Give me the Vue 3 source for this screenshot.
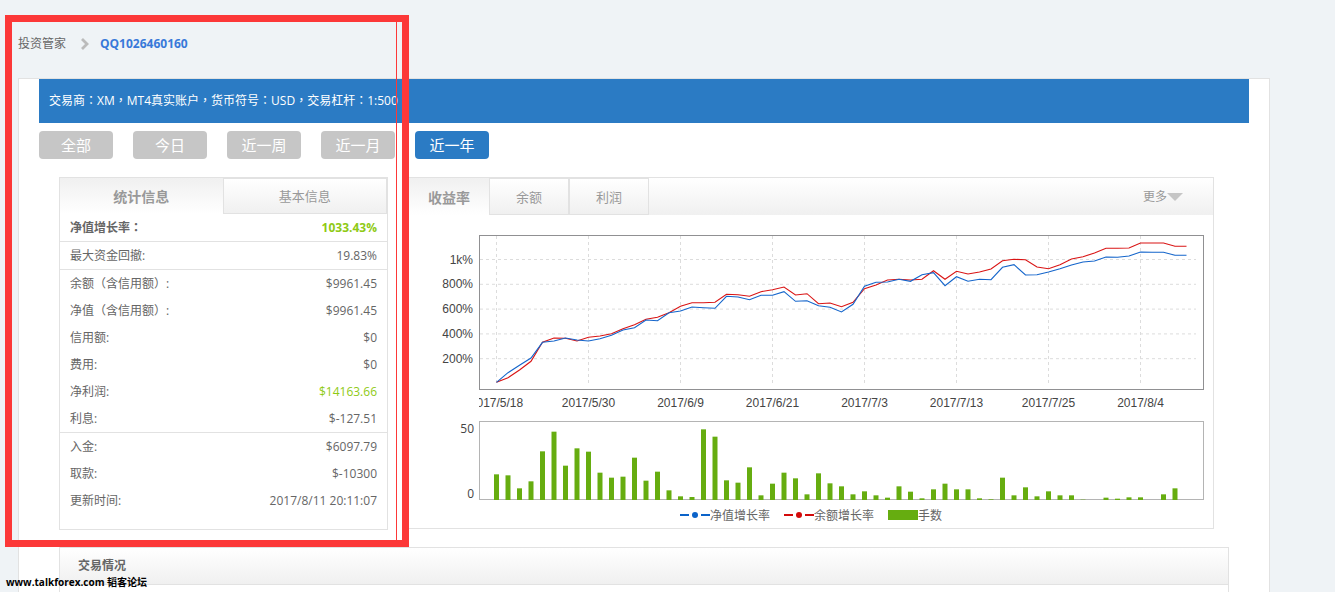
<script setup>
import { ref } from 'vue'

const ranges = ['全部', '今日', '近一周', '近一月', '近一年']
const range = ref('近一年')
const infoTabs = ['统计信息', '基本信息']
const infoTab = ref('统计信息')
const chartTabs = ['收益率', '余额', '利润']
const chartTab = ref('收益率')

const account = '交易商：XM，MT4真实账户，货币符号：USD，交易杠杆：1:500'
// Separates full-width punctuation so that it can be set centred in its cell
const split = (text) => text.split(/([：，])/).filter(Boolean).map((t) => ({ t, mark: /[：，]/.test(t) }))

const stats = [
  { label: '净值增长率：', value: '1033.43%', strong: true, green: true, line: true },
  { label: '最大资金回撤:', value: '19.83%', line: true },
  { label: '余额（含信用额）:', value: '$9961.45' },
  { label: '净值（含信用额）:', value: '$9961.45' },
  { label: '信用额:', value: '$0' },
  { label: '费用:', value: '$0' },
  { label: '净利润:', value: '$14163.66', green: true },
  { label: '利息:', value: '$-127.51', line: true },
  { label: '入金:', value: '$6097.79' },
  { label: '取款:', value: '$-10300' },
  { label: '更新时间:', value: '2017/8/11 20:11:07' }
]

// Depth of each sample below the top of the drawing, in thirds of a unit
const balance = [457, 443, 420, 394, 337, 324, 325, 333, 322, 318, 311, 296, 284, 268, 262, 248, 229, 218, 218, 217, 193, 194, 199, 185, 179, 171, 195, 191, 221, 219, 230, 217, 176, 165, 150, 148, 150, 148, 122, 148, 124, 132, 126, 117, 92, 88, 89, 111, 116, 104, 87, 80, 69, 55, 55, 54, 39, 39, 39, 49, 49]
const equity = [457, 428, 406, 384, 337, 333, 324, 330, 333, 326, 316, 300, 293, 270, 272, 248, 243, 231, 233, 235, 199, 201, 209, 196, 196, 185, 214, 212, 227, 232, 246, 223, 169, 157, 156, 148, 154, 134, 128, 167, 140, 154, 148, 149, 112, 104, 135, 134, 126, 116, 105, 96, 93, 81, 82, 78, 66, 67, 67, 76, 76]
const lots = [77, 74, 35, 56, 146, 205, 103, 155, 145, 82, 67, 70, 127, 58, 85, 29, 11, 9, 212, 190, 59, 52, 98, 14, 49, 82, 65, 17, 80, 50, 41, 17, 26, 14, 7, 41, 25, 5, 32, 49, 32, 32, 5, 2, 67, 14, 38, 11, 26, 14, 14, 1, 0, 7, 4, 8, 8, 0, 17, 35, 0]

const xAt = (i) => 87.5 + i * 11.5
const path = (values) => values.map((v, i) => `${xAt(i)},${(15 + v / 3).toFixed(1)}`).join(' ')
const dates = ['2017/5/18', '2017/5/30', '2017/6/9', '2017/6/21', '2017/7/3', '2017/7/13', '2017/7/25', '2017/8/4']
  .map((text, i) => ({ text, x: 87.5 + i * 92 }))
const levels = ['1k%', '800%', '600%', '400%', '200%'].map((text, i) => ({ text, y: 44.5 + i * 24.8 }))
const bars = lots.map((v, i) => ({ x: xAt(i) - 2.5, h: v / 3 })).filter((b) => b.h > 0)
</script>

<template>
  <div class="page">
    <nav class="crumbs">
      <a href="#" class="crumb">投资管家</a>
      <svg class="chevron" viewBox="0 0 10 12" width="10" height="12"><path d="M2 1l5 5-5 5" fill="none" stroke="#bbb" stroke-width="2.8" /></svg>
      <a href="#" class="crumb current">QQ1026460160</a>
    </nav>

    <main class="card">
      <header class="account"><span v-for="(p, i) in split(account)" :key="i" :class="{ mark: p.mark }">{{ p.t }}</span></header>
      <div class="ranges">
        <button v-for="r in ranges" :key="r" type="button" class="range" :class="{ on: r === range }" @click="range = r">{{ r }}</button>
      </div>

      <div class="columns">
        <section class="panel info">
          <div class="tabs wide">
            <button v-for="t in infoTabs" :key="t" type="button" class="tab" :class="{ on: t === infoTab }" @click="infoTab = t">{{ t }}</button>
          </div>
          <table class="stats">
            <tbody>
              <tr v-for="s in stats" :key="s.label" :class="{ strong: s.strong, line: s.line }">
                <th scope="row"><span v-for="(p, i) in split(s.label)" :key="i" :class="{ mark: p.mark }">{{ p.t }}</span></th>
                <td :class="{ green: s.green }">{{ s.value }}</td>
              </tr>
            </tbody>
          </table>
        </section>

        <section class="panel chart">
          <div class="tabs bar">
            <button v-for="t in chartTabs" :key="t" type="button" class="tab" :class="{ on: t === chartTab }" @click="chartTab = t">{{ t }}</button>
            <button type="button" class="more">更多<svg width="16" height="8" viewBox="0 0 16 8"><path d="M0 0h16L8 8z" fill="#c6c6c6" /></svg></button>
          </div>
          <svg class="plot" viewBox="0 0 804 290">
            <defs><clipPath id="dates"><rect x="70" y="175" width="734" height="26" /></clipPath></defs>
            <g class="grid">
              <line v-for="l in levels" :key="l.text" x1="71" x2="787" :y1="l.y" :y2="l.y" />
              <line v-for="d in dates" :key="d.text" :x1="d.x" :x2="d.x" y1="21" y2="168" />
            </g>
            <rect x="70.5" y="20.5" width="724" height="154" fill="none" stroke="#909092" />
            <polyline :points="path(balance)" fill="none" stroke="#d91414" stroke-width="1.1" />
            <polyline :points="path(equity)" fill="none" stroke="#1465cb" stroke-width="1.1" />
            <text v-for="l in levels" :key="l.text" class="axis" x="64" :y="l.y + 4" text-anchor="end">{{ l.text }}</text>
            <g clip-path="url(#dates)">
              <text v-for="d in dates" :key="d.text" class="axis" :x="d.x" y="192" text-anchor="middle">{{ d.text }}</text>
            </g>
            <rect x="70.5" y="206.5" width="724" height="78" fill="none" stroke="#b4b4b4" />
            <rect v-for="b in bars" :key="b.x" :x="b.x" :y="285 - b.h" width="5" :height="b.h" fill="#66ad10" />
            <text class="axis lots" x="65" y="218" text-anchor="end">50</text>
            <text class="axis lots" x="65" y="283" text-anchor="end">0</text>
          </svg>
          <div class="legend">
            <span class="key"><svg width="30" height="10" viewBox="0 0 30 10"><path d="M0 5h9M21 5h9" stroke="#0b63c9" stroke-width="2" /><circle cx="15" cy="5" r="3" fill="#0b63c9" /></svg>净值增长率</span>
            <span class="key"><svg width="30" height="10" viewBox="0 0 30 10"><path d="M0 5h9M21 5h9" stroke="#d30a0a" stroke-width="2" /><circle cx="15" cy="5" r="3" fill="#d30a0a" /></svg>余额增长率</span>
            <span class="key"><svg width="30" height="10" viewBox="0 0 30 10"><rect width="30" height="10" fill="#66ad10" /></svg>手数</span>
          </div>
        </section>
      </div>

      <section class="trades">
        <h2>交易情况</h2>
      </section>
    </main>

    <div class="highlight"></div>
    <div class="watermark">www.talkforex.com <span>韬客论坛</span></div>
  </div>
</template>

<style>
body { background: #eff3f6; }
</style>

<style scoped>
.page {
  position: relative;
  box-sizing: border-box;
  height: 100vh;
  min-height: 592px;
  padding: 34px 65px 0 18px;
  display: flex;
  flex-direction: column;
  overflow: hidden;
  background: #eff3f6;
  color: #666;
  font: 12px/20px "Open Sans", "Noto Sans CJK SC", sans-serif;
}
.page *, .page *::before { box-sizing: border-box; }
.mark { font-family: "Noto Sans CJK TC", sans-serif; line-height: 1; }
.crumbs { display: flex; align-items: center; height: 20px; margin-bottom: 24px; }
.crumb { color: #666; text-decoration: none; }
.crumb.current { color: #3879d9; font-weight: 700; }
.chevron { margin: 0 10px 0 14px; }
.card {
  flex: 1;
  display: flex;
  flex-direction: column;
  padding: 0 20px;
  border: 1px solid #e2e2e2;
  border-bottom: 0;
  background: #fff;
}
.account { height: 44px; padding: 0 10px; line-height: 44px; background: #2b7bc4; color: #fff; white-space: nowrap; }
.ranges { display: flex; gap: 20px; padding: 8px 0 18px; }
button { margin: 0; padding: 0; border: 0; font: inherit; cursor: pointer; }
.range { width: 74px; height: 28px; border-radius: 4px; background: #c6c6c6; color: #fff; font-size: 15px; line-height: 28px; }
.range.on { background: #2b7bc4; }
.columns { display: flex; align-items: flex-start; gap: 20px; padding: 0 35px 0 20px; }
.panel { border: 1px solid #e2e2e2; background: #fff; }
.info { width: 329px; padding-bottom: 15px; }
.chart { flex: 1; min-width: 0; }
.tabs { display: flex; }
.tab {
  width: 80px;
  border: 1px solid #e2e2e2;
  background: linear-gradient(#fff, #f0f0f0);
  color: #999;
  font-size: 13px;
}
.tab.on { border: 0; padding-top: 2px; background: linear-gradient(#f0f0f0, #fff); font-size: 14px; font-weight: 700; }
.wide { height: 36px; }
.wide .tab { flex: 1; }
.bar { height: 37px; background: linear-gradient(#fff, #f0f0f0); }
.more { display: flex; align-items: center; margin-left: auto; margin-right: 30px; background: none; color: #999; }
.stats { width: 100%; border-collapse: separate; border-spacing: 0; }
.stats th, .stats td { height: 27px; padding: 0 10px; line-height: 27px; font-weight: 400; }
.stats th { text-align: left; }
.stats td { text-align: right; }
.stats .strong th, .stats .strong td { font-weight: 700; }
.stats .line th, .stats .line td { height: 28px; border-bottom: 1px solid #e2e2e2; }
.stats .green { color: #8fca15; }
.plot { display: block; width: 100%; height: auto; }
.grid line { stroke: #dcdcdc; stroke-dasharray: 3 3; }
.axis { fill: #444; font: 12px "Liberation Sans", Arial, sans-serif; }
.axis.lots { font-family: "Open Sans", sans-serif; }
.legend { display: flex; justify-content: center; gap: 14px; height: 23px; }
.key { display: flex; align-items: center; height: 22px; }
.key svg { margin-bottom: 2px; }
.trades { flex: 1; margin: 17px 20px 0; border: 1px solid #e2e2e2; border-bottom: 0; }
.trades h2 {
  height: 37px;
  margin: 0;
  padding: 0 18px;
  border-bottom: 1px solid #e2e2e2;
  background: linear-gradient(#fff, #f0f0f0);
  font-size: 12px;
  line-height: 36px;
}
.highlight {
  position: absolute;
  top: 15px;
  left: 5px;
  width: 404px;
  height: 532px;
  border: 7px solid #fc3838;
  pointer-events: none;
}
.highlight::before { content: ""; position: absolute; top: 0; right: 5px; bottom: 0; width: 1px; background: #fc3838; }
.watermark { position: absolute; left: 6px; bottom: 0; color: #000; font-size: 10px; font-weight: 700; line-height: 20px; white-space: nowrap; }
</style>
